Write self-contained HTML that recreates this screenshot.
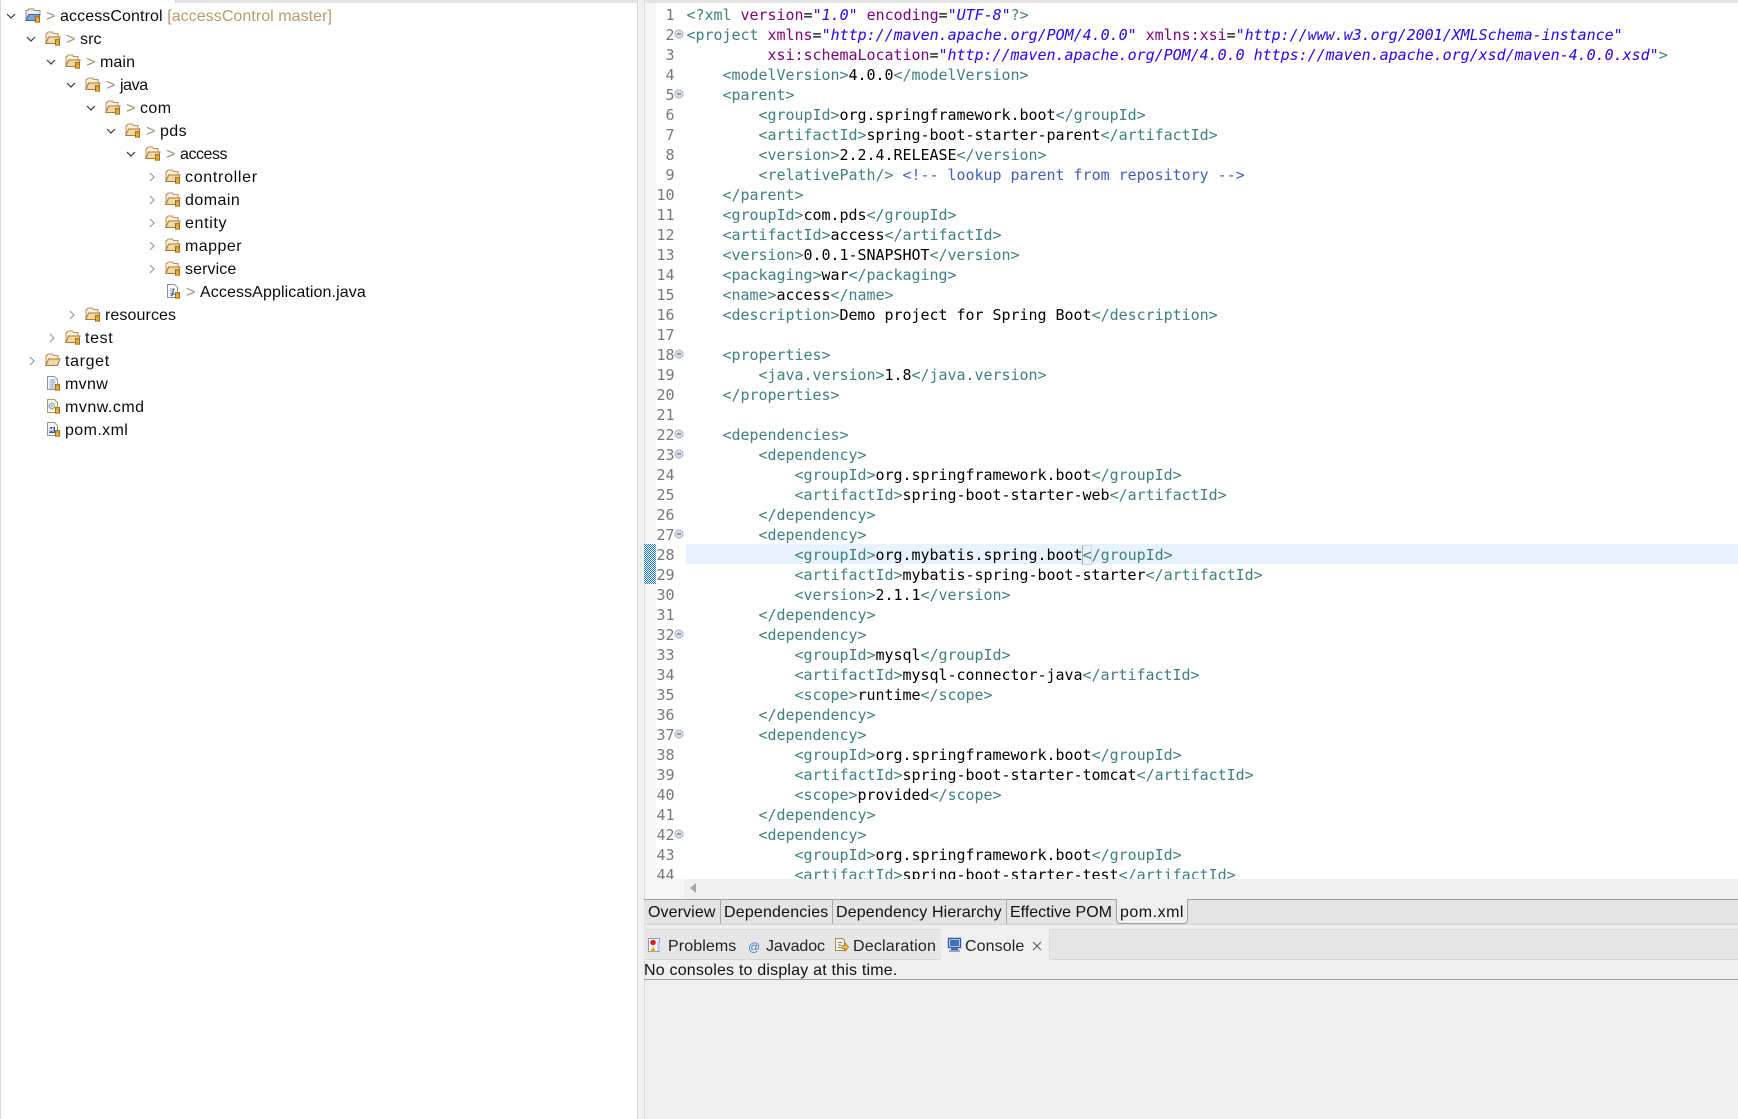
<!DOCTYPE html>
<html><head><meta charset="utf-8"><style>
html,body{margin:0;padding:0;background:#fff}
body{position:relative;width:1738px;height:1119px;overflow:hidden;font-family:"Liberation Sans",sans-serif;font-size:16px;color:#111}
.b{position:absolute}
.r{position:absolute;height:23px;line-height:23px;white-space:pre;letter-spacing:.1px;color:#0c0c0c}
.d{color:#a89070}
.g{color:#b89a6a}
svg.i{position:absolute;width:16px;height:16px;overflow:visible}
#code{position:absolute;left:686.5px;top:5px;margin:0;font:15px/20px "DejaVu Sans Mono",monospace;letter-spacing:-.03px;color:#000;white-space:pre}
#nums{position:absolute;left:656px;width:18.5px;top:5px;font:15px/20px "DejaVu Sans Mono",monospace;letter-spacing:-.03px;color:#787878;text-align:right;white-space:pre}
#clip{position:absolute;left:645px;top:3px;width:1093px;height:876px;overflow:hidden}
#inner{position:absolute;left:-645px;top:-3px;width:1738px;height:1000px}
.t{color:#3f7f7f}.a{color:#7f007f}.v{color:#2a00ff;font-style:italic}.c{color:#3f5fbf}
.m{position:absolute;height:24px;line-height:24px;top:901px;white-space:pre;letter-spacing:.1px;color:#111}
.k{position:absolute;height:28px;line-height:28px;top:933px;white-space:pre;letter-spacing:.1px;color:#222}
.s{position:absolute;top:900px;height:24px;width:1px;background:#a8a8a8}
</style></head><body>
<svg width="0" height="0" style="position:absolute"><defs>
<symbol id="j" viewBox="0 0 16 16"><path d="M10.500 9.500h4v5.600h-4z" fill="#f1b233" stroke="#a06c12" stroke-width="1"/><path d="M10.500 9.500h4v1.400h-4z" fill="#f9dc8c" stroke="#a06c12" stroke-width=".7"/></symbol>
<symbol id="f" viewBox="0 0 16 16"><path d="M1 13.500V3.500h1l1-1.500h4.500l1 1.500h4.500v3" fill="#faf0d8" stroke="#b59060"/><path d="M.8 13.500L3.600 7H15l-2.600 6.500z" fill="#f2d9a4" stroke="#a87a3a"/><use href="#j"/></symbol>
<symbol id="o" viewBox="0 0 16 16"><path d="M1 13.500V3.500h1l1-1.500h4.500l1 1.500h4.500v3" fill="#faf0d8" stroke="#b59060"/><path d="M.8 13.500L3.600 7H15l-2.600 6.500z" fill="#f2d9a4" stroke="#a87a3a"/></symbol>
<symbol id="p" viewBox="0 0 16 16"><path d="M1 13.500V3.500h1.500l1-1.500h5l1 1.500h5.500v3" fill="#f6efdc" stroke="#8a8a98"/><path d="M1 13.500L3.600 7.500H15l-2.400 6z" fill="#7ba6de" stroke="#3f64a8"/><use href="#j"/></symbol>
<symbol id="y" viewBox="0 0 16 16"><path d="M2.500 1.500h7l3 3v10h-10z" fill="#fff" stroke="#8d8d8d"/><path d="M5 6h5M5 8h2" stroke="#8aa" fill="none"/><path d="M8.500 5.500l-1 6q-.5 1.500-1.800 1" fill="none" stroke="#3c62aa" stroke-width="1.300"/><path d="M5 11q3-1 5 .5" fill="none" stroke="#3c62aa"/><use href="#j"/></symbol>
<symbol id="n" viewBox="0 0 16 16"><path d="M2.500 1.500h7l3 3v10h-10z" fill="#fff" stroke="#8d93a0"/><path d="M4.500 5h6M4.500 7h6M4.500 9h6M4.500 11h5M4.500 13h5" stroke="#7d9ac5" fill="none"/><use href="#j"/></symbol>
<symbol id="q" viewBox="0 0 16 16"><path d="M2.500 1.500h7l3 3v10h-10z" fill="#fbf7e8" stroke="#a89a6c"/><circle cx="6.800" cy="8" r="2.700" fill="none" stroke="#8fa6c0" stroke-width="1.300"/><circle cx="6.800" cy="8" r=".9" fill="#7d8da0"/><use href="#j"/></symbol>
<symbol id="x" viewBox="0 0 16 16"><path d="M2.500 1.500h7l3 3v10h-10z" fill="#fff" stroke="#8d93a0"/><path d="M4 6h6v6H4z" fill="#2e5fa8"/><path d="M4.800 11V7l1.600 2.500L8 7v4" fill="none" stroke="#fff"/><use href="#j"/></symbol>
<symbol id="dn" viewBox="0 0 10 10"><path d="M1 3l4 4 4-4" fill="none" stroke="#383838" stroke-width="1.200"/></symbol>
<symbol id="rt" viewBox="0 0 10 10"><path d="M3 1l4 4-4 4" fill="none" stroke="#9a9a9a" stroke-width="1.200"/></symbol>
<symbol id="fd" viewBox="0 0 10 10"><circle cx="5" cy="5" r="4.100" fill="#d6deE8" stroke="#aeb8c6"/><path d="M3 5h4" stroke="#555" stroke-width="1"/></symbol>
</defs></svg>

<!-- chrome -->
<div class="b" style="left:0;top:0;width:1px;height:1119px;background:#dcdcdc"></div>
<div class="b" style="left:175px;top:0;width:462px;height:3px;background:#e3e3e3;border-left:1px solid #d0d0d0;box-sizing:border-box"></div>
<div class="b" style="left:637px;top:0;width:8px;height:1119px;background:#f0f0f0;border-left:1px solid #d8d8d8;border-right:1px solid #d8d8d8;box-sizing:border-box"></div>
<div class="b" style="left:645px;top:0;width:1093px;height:3px;background:#e3e3e3"></div>
<div class="b" style="left:645px;top:3px;width:11px;height:876px;background:#f6f6f6"></div>
<div class="b" style="left:644px;top:544px;width:12px;height:40px;background-color:#1f72d8;background-image:conic-gradient(#fff 25%,transparent 0 50%,#fff 0 75%,transparent 0);background-size:2px 2px"></div>
<div class="b" style="left:686px;top:544px;width:1052px;height:20px;background:#e8f2fe"></div>

<!-- tree -->
<svg class="i" style="left:6px;top:11px;width:10px;height:10px"><use href="#dn"/></svg>
<svg class="i" style="left:25px;top:7px"><use href="#p"/></svg>
<div class="r d" style="left:46px;top:5px">&gt;</div>
<div class="r" style="left:60px;top:5px">accessControl <span class="g" style="letter-spacing:.05px">[accessControl master]</span></div>

<svg class="i" style="left:26px;top:34px;width:10px;height:10px"><use href="#dn"/></svg>
<svg class="i" style="left:45px;top:30px"><use href="#f"/></svg>
<div class="r d" style="left:66px;top:28px">&gt;</div>
<div class="r" style="left:80px;top:28px">src</div>

<svg class="i" style="left:46px;top:57px;width:10px;height:10px"><use href="#dn"/></svg>
<svg class="i" style="left:65px;top:53px"><use href="#f"/></svg>
<div class="r d" style="left:86px;top:51px">&gt;</div>
<div class="r" style="left:100px;top:51px">main</div>

<svg class="i" style="left:66px;top:80px;width:10px;height:10px"><use href="#dn"/></svg>
<svg class="i" style="left:85px;top:76px"><use href="#f"/></svg>
<div class="r d" style="left:106px;top:74px">&gt;</div>
<div class="r" style="left:120px;top:74px;letter-spacing:-.4px">java</div>

<svg class="i" style="left:86px;top:103px;width:10px;height:10px"><use href="#dn"/></svg>
<svg class="i" style="left:105px;top:99px"><use href="#f"/></svg>
<div class="r d" style="left:126px;top:97px">&gt;</div>
<div class="r" style="left:140px;top:97px;letter-spacing:.4px">com</div>

<svg class="i" style="left:106px;top:126px;width:10px;height:10px"><use href="#dn"/></svg>
<svg class="i" style="left:125px;top:122px"><use href="#f"/></svg>
<div class="r d" style="left:146px;top:120px">&gt;</div>
<div class="r" style="left:160px;top:120px;letter-spacing:.4px">pds</div>

<svg class="i" style="left:126px;top:149px;width:10px;height:10px"><use href="#dn"/></svg>
<svg class="i" style="left:145px;top:145px"><use href="#f"/></svg>
<div class="r d" style="left:166px;top:143px">&gt;</div>
<div class="r" style="left:180px;top:143px;letter-spacing:-.45px">access</div>

<svg class="i" style="left:147px;top:172px;width:10px;height:10px"><use href="#rt"/></svg>
<svg class="i" style="left:165px;top:168px"><use href="#f"/></svg>
<div class="r" style="left:185px;top:166px;letter-spacing:.7px">controller</div>

<svg class="i" style="left:147px;top:195px;width:10px;height:10px"><use href="#rt"/></svg>
<svg class="i" style="left:165px;top:191px"><use href="#f"/></svg>
<div class="r" style="left:185px;top:189px;letter-spacing:.47px">domain</div>

<svg class="i" style="left:147px;top:218px;width:10px;height:10px"><use href="#rt"/></svg>
<svg class="i" style="left:165px;top:214px"><use href="#f"/></svg>
<div class="r" style="left:185px;top:212px;letter-spacing:.65px">entity</div>

<svg class="i" style="left:147px;top:241px;width:10px;height:10px"><use href="#rt"/></svg>
<svg class="i" style="left:165px;top:237px"><use href="#f"/></svg>
<div class="r" style="left:185px;top:235px;letter-spacing:.47px">mapper</div>

<svg class="i" style="left:147px;top:264px;width:10px;height:10px"><use href="#rt"/></svg>
<svg class="i" style="left:165px;top:260px"><use href="#f"/></svg>
<div class="r" style="left:185px;top:258px">service</div>

<svg class="i" style="left:165px;top:283px"><use href="#y"/></svg>
<div class="r d" style="left:186px;top:281px">&gt;</div>
<div class="r" style="left:200px;top:281px">AccessApplication.java</div>

<svg class="i" style="left:67px;top:310px;width:10px;height:10px"><use href="#rt"/></svg>
<svg class="i" style="left:85px;top:306px"><use href="#f"/></svg>
<div class="r" style="left:105px;top:304px">resources</div>

<svg class="i" style="left:47px;top:333px;width:10px;height:10px"><use href="#rt"/></svg>
<svg class="i" style="left:65px;top:329px"><use href="#f"/></svg>
<div class="r" style="left:85px;top:327px;letter-spacing:.65px">test</div>

<svg class="i" style="left:27px;top:356px;width:10px;height:10px"><use href="#rt"/></svg>
<svg class="i" style="left:45px;top:352px"><use href="#o"/></svg>
<div class="r" style="left:65px;top:350px;letter-spacing:.65px">target</div>

<svg class="i" style="left:45px;top:375px"><use href="#n"/></svg>
<div class="r" style="left:65px;top:373px;letter-spacing:.35px">mvnw</div>
<svg class="i" style="left:45px;top:398px"><use href="#q"/></svg>
<div class="r" style="left:65px;top:396px;letter-spacing:.5px">mvnw.cmd</div>
<svg class="i" style="left:45px;top:421px"><use href="#x"/></svg>
<div class="r" style="left:65px;top:419px;letter-spacing:.4px">pom.xml</div>

<!-- editor -->
<div id="clip"><div id="inner">
<div id="nums">1
2
3
4
5
6
7
8
9
10
11
12
13
14
15
16
17
18
19
20
21
22
23
24
25
26
27
28
29
30
31
32
33
34
35
36
37
38
39
40
41
42
43
44</div>
<svg class="i" style="left:674px;top:29px;width:10px;height:10px"><use href="#fd"/></svg>
<svg class="i" style="left:674px;top:89px;width:10px;height:10px"><use href="#fd"/></svg>
<svg class="i" style="left:674px;top:349px;width:10px;height:10px"><use href="#fd"/></svg>
<svg class="i" style="left:674px;top:429px;width:10px;height:10px"><use href="#fd"/></svg>
<svg class="i" style="left:674px;top:449px;width:10px;height:10px"><use href="#fd"/></svg>
<svg class="i" style="left:674px;top:529px;width:10px;height:10px"><use href="#fd"/></svg>
<svg class="i" style="left:674px;top:629px;width:10px;height:10px"><use href="#fd"/></svg>
<svg class="i" style="left:674px;top:729px;width:10px;height:10px"><use href="#fd"/></svg>
<svg class="i" style="left:674px;top:829px;width:10px;height:10px"><use href="#fd"/></svg>
<div class="b" style="left:1082px;top:545px;width:8px;height:18px;border:1px solid #d4d4d4;border-left-color:#aaa"></div>
<pre id="code"><span class="t">&lt;?xml</span> <span class="a">version</span>=<span class="v">"1.0"</span> <span class="a">encoding</span>=<span class="v">"UTF-8"</span><span class="t">?&gt;</span>
<span class="t">&lt;project</span> <span class="a">xmlns</span>=<span class="v">"http://maven.apache.org/POM/4.0.0"</span> <span class="a">xmlns:xsi</span>=<span class="v">"http://www.w3.org/2001/XMLSchema-instance"</span>
         <span class="a">xsi:schemaLocation</span>=<span class="v">"http://maven.apache.org/POM/4.0.0 https://maven.apache.org/xsd/maven-4.0.0.xsd"</span><span class="t">&gt;</span>
    <span class="t">&lt;modelVersion&gt;</span>4.0.0<span class="t">&lt;/modelVersion&gt;</span>
    <span class="t">&lt;parent&gt;</span>
        <span class="t">&lt;groupId&gt;</span>org.springframework.boot<span class="t">&lt;/groupId&gt;</span>
        <span class="t">&lt;artifactId&gt;</span>spring-boot-starter-parent<span class="t">&lt;/artifactId&gt;</span>
        <span class="t">&lt;version&gt;</span>2.2.4.RELEASE<span class="t">&lt;/version&gt;</span>
        <span class="t">&lt;relativePath/&gt;</span> <span class="c">&lt;!-- lookup parent from repository --&gt;</span>
    <span class="t">&lt;/parent&gt;</span>
    <span class="t">&lt;groupId&gt;</span>com.pds<span class="t">&lt;/groupId&gt;</span>
    <span class="t">&lt;artifactId&gt;</span>access<span class="t">&lt;/artifactId&gt;</span>
    <span class="t">&lt;version&gt;</span>0.0.1-SNAPSHOT<span class="t">&lt;/version&gt;</span>
    <span class="t">&lt;packaging&gt;</span>war<span class="t">&lt;/packaging&gt;</span>
    <span class="t">&lt;name&gt;</span>access<span class="t">&lt;/name&gt;</span>
    <span class="t">&lt;description&gt;</span>Demo project for Spring Boot<span class="t">&lt;/description&gt;</span>

    <span class="t">&lt;properties&gt;</span>
        <span class="t">&lt;java.version&gt;</span>1.8<span class="t">&lt;/java.version&gt;</span>
    <span class="t">&lt;/properties&gt;</span>

    <span class="t">&lt;dependencies&gt;</span>
        <span class="t">&lt;dependency&gt;</span>
            <span class="t">&lt;groupId&gt;</span>org.springframework.boot<span class="t">&lt;/groupId&gt;</span>
            <span class="t">&lt;artifactId&gt;</span>spring-boot-starter-web<span class="t">&lt;/artifactId&gt;</span>
        <span class="t">&lt;/dependency&gt;</span>
        <span class="t">&lt;dependency&gt;</span>
            <span class="t">&lt;groupId&gt;</span>org.mybatis.spring.boot<span class="t">&lt;/groupId&gt;</span>
            <span class="t">&lt;artifactId&gt;</span>mybatis-spring-boot-starter<span class="t">&lt;/artifactId&gt;</span>
            <span class="t">&lt;version&gt;</span>2.1.1<span class="t">&lt;/version&gt;</span>
        <span class="t">&lt;/dependency&gt;</span>
        <span class="t">&lt;dependency&gt;</span>
            <span class="t">&lt;groupId&gt;</span>mysql<span class="t">&lt;/groupId&gt;</span>
            <span class="t">&lt;artifactId&gt;</span>mysql-connector-java<span class="t">&lt;/artifactId&gt;</span>
            <span class="t">&lt;scope&gt;</span>runtime<span class="t">&lt;/scope&gt;</span>
        <span class="t">&lt;/dependency&gt;</span>
        <span class="t">&lt;dependency&gt;</span>
            <span class="t">&lt;groupId&gt;</span>org.springframework.boot<span class="t">&lt;/groupId&gt;</span>
            <span class="t">&lt;artifactId&gt;</span>spring-boot-starter-tomcat<span class="t">&lt;/artifactId&gt;</span>
            <span class="t">&lt;scope&gt;</span>provided<span class="t">&lt;/scope&gt;</span>
        <span class="t">&lt;/dependency&gt;</span>
        <span class="t">&lt;dependency&gt;</span>
            <span class="t">&lt;groupId&gt;</span>org.springframework.boot<span class="t">&lt;/groupId&gt;</span>
            <span class="t">&lt;artifactId&gt;</span>spring-boot-starter-test<span class="t">&lt;/artifactId&gt;</span></pre>
</div></div>

<!-- scrollbar -->
<div class="b" style="left:645px;top:879px;width:1093px;height:20px;background:#f0f0f0"></div>
<div class="b" style="left:645px;top:879px;width:39px;height:20px;background:#f6f6f6"></div>
<svg class="i" style="left:689px;top:883px;width:10px;height:10px"><path d="M7 0v10L1 5z" fill="#a8a8a8"/></svg>

<!-- bottom area -->
<div class="b" style="left:645px;top:899px;width:1093px;height:220px;background:#efefef"></div>
<div class="b" style="left:644px;top:899px;width:1094px;height:1px;background:#a0a0a0"></div>
<div class="b" style="left:644px;top:900px;width:1094px;height:24px;background:#e3e3e3"></div>
<div class="b" style="left:644px;top:924px;width:1094px;height:1px;background:#d6d6d6"></div>
<div class="m" style="left:648px">Overview</div>
<div class="s" style="left:720px"></div>
<div class="m" style="left:724px;letter-spacing:.18px">Dependencies</div>
<div class="s" style="left:832px"></div>
<div class="m" style="left:836px;letter-spacing:.15px">Dependency Hierarchy</div>
<div class="s" style="left:1006px"></div>
<div class="m" style="left:1010px;letter-spacing:0">Effective POM</div>
<div class="b" style="left:1116px;top:899px;width:70px;height:24px;background:#efefef;border:1px solid #a0a0a0;border-top:0;border-radius:0 0 4px 4px;box-sizing:content-box"></div>
<div class="m" style="left:1120px;letter-spacing:.5px">pom.xml</div>

<div class="b" style="left:644px;top:929px;width:1094px;height:29px;background:#e6e6e6;border-top:1px solid #dcdcdc;border-bottom:1px solid #d6d6d6;box-sizing:content-box"></div>
<div class="b" style="left:941px;top:929px;width:109px;height:31px;background:#f0f0f0;border-right:1px solid #dcdcdc;box-sizing:border-box"></div>

<svg class="i" style="left:647px;top:937px"><path d="M1.500 1.500h11v13h-11z" fill="#fff" stroke="#8d9bb0"/><path d="M10 3l3 3v8h-3z" fill="#c6d4e6"/><circle cx="6" cy="5.500" r="2.800" fill="#d8202a"/><path d="M3 14.500l3-5 3 5z" fill="#f0b028"/></svg>
<div class="k" style="left:668px">Problems</div>
<div class="k" style="left:748px;font-size:12px;color:#3f78b8">@</div>
<div class="k" style="left:766px;letter-spacing:-.1px">Javadoc</div>
<svg class="i" style="left:833px;top:937px"><path d="M2.500 1.500h7l2 2v10h-9z" fill="#fbf6e0" stroke="#a08a50"/><path d="M5 5.500h4M5 8h3M5 10.500h3" stroke="#5580b0" fill="none"/><path d="M9 8.500h3V6l3.500 4-3.500 4v-2.500H9z" fill="#f0c050" stroke="#b07818" stroke-width=".8"/></svg>
<div class="k" style="left:853px;letter-spacing:.2px">Declaration</div>
<svg class="i" style="left:947px;top:937px"><path d="M1.500 1.500h12v9h-12z" fill="#dbe8f6" stroke="#2f5c9e" stroke-width="1.400"/><path d="M3 3h9v6H3z" fill="#3f70b8"/><path d="M4 11.500h7v1.500H4zM2 13.500h11v1H2z" fill="#2f5c9e"/></svg>
<div class="k" style="left:965px">Console</div>
<svg class="i" style="left:1032px;top:941px;width:10px;height:10px"><path d="M1 1l8 8M9 1l-8 8" stroke="#555" stroke-width="1" fill="none"/></svg>

<div class="b" style="left:644px;top:959px;height:24px;line-height:24px;letter-spacing:.2px;white-space:pre;color:#111">No consoles to display at this time.</div>
<div class="b" style="left:644px;top:979px;width:1094px;height:1px;background:#a0a0a0"></div>
</body></html>
